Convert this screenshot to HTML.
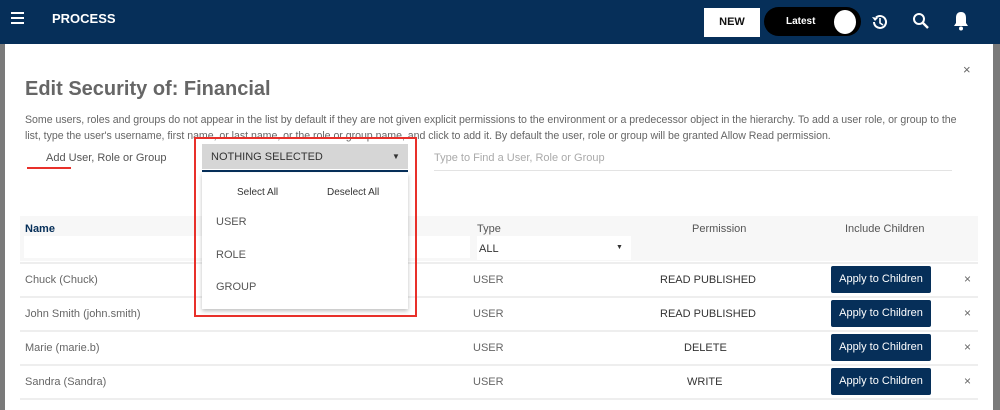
<!DOCTYPE html>
<html><head><style>
*{box-sizing:border-box;margin:0;padding:0}
body{width:1000px;height:410px;overflow:hidden;background:#7a7a7a;font-family:"Liberation Sans",sans-serif;position:relative}
.hdr{position:absolute;left:0;top:0;width:1000px;height:44px;background:#062f59}
.abs{position:absolute}
.modal{position:absolute;left:5px;top:44px;width:988px;height:366px;background:#fff}
.t{position:absolute;white-space:nowrap}
.btn{position:absolute;left:831px;width:100px;height:27px;background:#062f59;color:#fff;font-size:11px;text-align:center;line-height:27px;border-radius:2px}
.row{position:absolute;left:20px;width:958px;height:2px;background:#eee}
.x{position:absolute;left:964px;font-size:12px;color:#666}
</style></head><body>
<div class="hdr">
  <div class="abs" style="left:11px;top:12px;width:13px;height:2px;background:#fff;box-shadow:0 5px #fff,0 10px #fff"></div>
  <div class="t" style="left:52px;top:11px;color:#fff;font-weight:bold;font-size:13px">PROCESS</div>
  <div class="abs" style="left:704px;top:8px;width:56px;height:29px;background:#fff;color:#111;font-size:11px;font-weight:bold;text-align:center;line-height:29px">NEW</div>
  <div class="abs" style="left:764px;top:7px;width:97px;height:29px;background:#000;border-radius:15px"></div>
  <div class="t" style="left:786px;top:16px;color:#fff;font-size:10px;font-weight:bold">Latest</div>
  <div class="abs" style="left:834px;top:10px;width:22px;height:24px;background:#fff;border-radius:50%"></div>
  <svg class="abs" style="left:870px;top:12px" width="20" height="20" viewBox="0 0 20 20"><path d="M4 10a6 6 0 1 0 2-4.5" fill="none" stroke="#fff" stroke-width="2"/><path d="M2 5l3 4 3-3z" fill="#fff"/><path d="M10 6v5l3 2" fill="none" stroke="#fff" stroke-width="1.6"/></svg>
  <svg class="abs" style="left:911px;top:11px" width="20" height="20" viewBox="0 0 20 20"><circle cx="8" cy="8" r="5" fill="none" stroke="#fff" stroke-width="2"/><path d="M12 12l5 5" stroke="#fff" stroke-width="2.4"/></svg>
  <svg class="abs" style="left:951px;top:10px" width="20" height="22" viewBox="0 0 20 22"><path d="M10 2c-4 0-5 3-5 6v5l-2 3h14l-2-3V8c0-3-1-6-5-6z" fill="#fff"/><circle cx="10" cy="18.5" r="2" fill="#fff"/></svg>
</div>
<div class="modal"></div>
<div class="t" style="left:963px;top:62px;font-size:13px;color:#666">×</div>
<div class="t" style="left:25px;top:78px;font-size:20px;font-weight:bold;color:#666">Edit Security of: Financial</div>
<div class="t" style="left:25px;top:114px;font-size:10.6px;color:#666;letter-spacing:-0.03px">Some users, roles and groups do not appear in the list by default if they are not given explicit permissions to the environment or a predecessor object in the hierarchy. To add a user role, or group to the</div>
<div class="t" style="left:25px;top:130px;font-size:10.6px;color:#666;letter-spacing:-0.03px">list, type the user's username, first name, or last name, or the role or group name, and click to add it. By default the user, role or group will be granted Allow Read permission.</div>
<div class="t" style="left:46px;top:152px;font-size:11px;color:#555">Add User, Role or Group</div>
<div class="abs" style="left:27px;top:167px;width:44px;height:2px;background:#e8302a"></div>
<div class="abs" style="left:202px;top:144px;width:206px;height:25px;background:#d6d6d6"></div>
<div class="t" style="left:211px;top:151px;font-size:11px;color:#333">NOTHING SELECTED</div>
<div class="t" style="left:392px;top:152px;font-size:8px;color:#333">▼</div>
<div class="abs" style="left:202px;top:170px;width:206px;height:2px;background:#062f59"></div>
<div class="t" style="left:434px;top:152px;font-size:11px;color:#aaa">Type to Find a User, Role or Group</div>
<div class="abs" style="left:434px;top:170px;width:518px;height:1px;background:#e3e3e3"></div>
<div class="abs" style="left:20px;top:216px;width:958px;height:45px;background:#f7f7f7"></div>
<div class="t" style="left:25px;top:223px;font-size:11px;font-weight:bold;color:#062f59">Name</div>
<div class="abs" style="left:24px;top:236px;width:446px;height:22px;background:#fff"></div>
<div class="t" style="left:477px;top:223px;font-size:11px;color:#555">Type</div>
<div class="abs" style="left:477px;top:236px;width:154px;height:24px;background:#fff"></div>
<div class="t" style="left:479px;top:243px;font-size:11px;color:#333">ALL</div>
<div class="t" style="left:616px;top:244px;font-size:7px;color:#333">▼</div>
<div class="t" style="left:692px;top:223px;font-size:11px;color:#555">Permission</div>
<div class="t" style="left:845px;top:223px;font-size:11px;color:#555">Include Children</div>
<div class="row" style="top:262px"></div>
<div class="row" style="top:296px"></div>
<div class="row" style="top:330px"></div>
<div class="row" style="top:364px"></div>
<div class="row" style="top:398px"></div>
<div class="t" style="left:25px;top:274px;font-size:11px;color:#666">Chuck (Chuck)</div>
<div class="t" style="left:25px;top:308px;font-size:11px;color:#666">John Smith (john.smith)</div>
<div class="t" style="left:25px;top:342px;font-size:11px;color:#666">Marie (marie.b)</div>
<div class="t" style="left:25px;top:376px;font-size:11px;color:#666">Sandra (Sandra)</div>
<div class="t" style="left:473px;top:274px;font-size:11px;color:#666">USER</div>
<div class="t" style="left:473px;top:308px;font-size:11px;color:#666">USER</div>
<div class="t" style="left:473px;top:342px;font-size:11px;color:#666">USER</div>
<div class="t" style="left:473px;top:376px;font-size:11px;color:#666">USER</div>
<div class="t" style="left:660px;top:274px;font-size:11px;color:#333">READ PUBLISHED</div>
<div class="t" style="left:660px;top:308px;font-size:11px;color:#333">READ PUBLISHED</div>
<div class="t" style="left:684px;top:342px;font-size:11px;color:#333">DELETE</div>
<div class="t" style="left:687px;top:376px;font-size:11px;color:#333">WRITE</div>
<div class="btn" style="top:266px">Apply to Children</div>
<div class="btn" style="top:300px">Apply to Children</div>
<div class="btn" style="top:334px">Apply to Children</div>
<div class="btn" style="top:368px">Apply to Children</div>
<div class="x" style="top:272px">×</div>
<div class="x" style="top:306px">×</div>
<div class="x" style="top:340px">×</div>
<div class="x" style="top:374px">×</div>
<div class="abs" style="left:202px;top:173px;width:206px;height:136px;background:#fff;box-shadow:0 2px 4px rgba(0,0,0,.25)"></div>
<div class="t" style="left:237px;top:187px;font-size:10px;color:#333">Select All</div>
<div class="t" style="left:327px;top:187px;font-size:10px;color:#333">Deselect All</div>
<div class="t" style="left:216px;top:216px;font-size:11px;color:#555">USER</div>
<div class="t" style="left:216px;top:249px;font-size:11px;color:#555">ROLE</div>
<div class="t" style="left:216px;top:281px;font-size:11px;color:#555">GROUP</div>
<div class="abs" style="left:194px;top:137px;width:223px;height:180px;border:2px solid #e8302a"></div>
</body></html>
